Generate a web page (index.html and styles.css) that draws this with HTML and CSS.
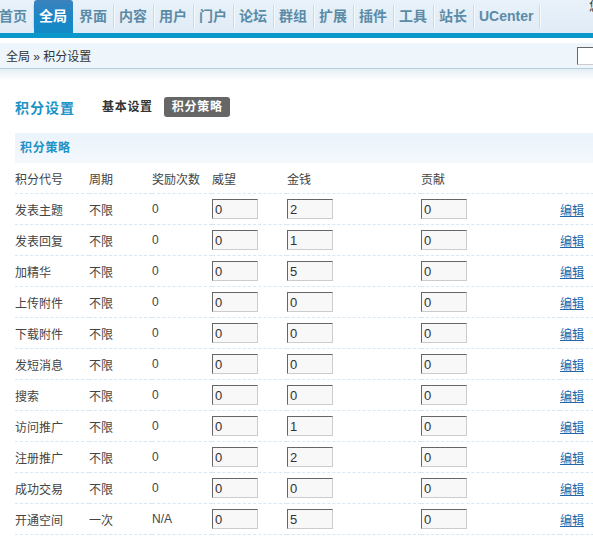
FILE: index.html
```html
<!DOCTYPE html>
<html lang="zh-CN">
<head>
<meta charset="utf-8">
<title>积分设置</title>
<link rel="stylesheet" href="styles.css">
</head>
<body>
<div class="header">
  <ul class="menu">
    <li><a href="#">首页</a></li>
    <li class="on"><a href="#">全局</a></li>
    <li><a href="#">界面</a></li>
    <li><a href="#">内容</a></li>
    <li><a href="#">用户</a></li>
    <li><a href="#">门户</a></li>
    <li><a href="#">论坛</a></li>
    <li><a href="#">群组</a></li>
    <li><a href="#">扩展</a></li>
    <li><a href="#">插件</a></li>
    <li><a href="#">工具</a></li>
    <li><a href="#">站长</a></li>
    <li><a href="#" class="latin">UCenter</a></li>
  </ul>
  <span class="welcome">您好</span>
</div>
<div class="crumb">
  <span class="crumb-text">全局 &raquo; 积分设置</span>
  <input class="search" type="text">
</div>
<div class="crumb-shade"></div>

<div class="main">
  <div class="titlebar">
    <h3 class="title">积分设置</h3>
    <a class="tab" href="#">基本设置</a>
    <a class="tab current" href="#">积分策略</a>
  </div>
  <div class="section">积分策略</div>
  <table class="grid">
    <colgroup>
      <col class="c1"><col class="c2"><col class="c3"><col class="c4"><col class="c5"><col class="c6"><col class="c7">
    </colgroup>
    <thead>
      <tr><th>积分代号</th><th>周期</th><th>奖励次数</th><th>威望</th><th>金钱</th><th>贡献</th><th></th></tr>
    </thead>
    <tbody>
      <tr><td>发表主题</td><td>不限</td><td>0</td><td><input class="txt" value="0"></td><td><input class="txt" value="2"></td><td><input class="txt" value="0"></td><td><a class="edit" href="#">编辑</a></td></tr>
      <tr><td>发表回复</td><td>不限</td><td>0</td><td><input class="txt" value="0"></td><td><input class="txt" value="1"></td><td><input class="txt" value="0"></td><td><a class="edit" href="#">编辑</a></td></tr>
      <tr><td>加精华</td><td>不限</td><td>0</td><td><input class="txt" value="0"></td><td><input class="txt" value="5"></td><td><input class="txt" value="0"></td><td><a class="edit" href="#">编辑</a></td></tr>
      <tr><td>上传附件</td><td>不限</td><td>0</td><td><input class="txt" value="0"></td><td><input class="txt" value="0"></td><td><input class="txt" value="0"></td><td><a class="edit" href="#">编辑</a></td></tr>
      <tr><td>下载附件</td><td>不限</td><td>0</td><td><input class="txt" value="0"></td><td><input class="txt" value="0"></td><td><input class="txt" value="0"></td><td><a class="edit" href="#">编辑</a></td></tr>
      <tr><td>发短消息</td><td>不限</td><td>0</td><td><input class="txt" value="0"></td><td><input class="txt" value="0"></td><td><input class="txt" value="0"></td><td><a class="edit" href="#">编辑</a></td></tr>
      <tr><td>搜索</td><td>不限</td><td>0</td><td><input class="txt" value="0"></td><td><input class="txt" value="0"></td><td><input class="txt" value="0"></td><td><a class="edit" href="#">编辑</a></td></tr>
      <tr><td>访问推广</td><td>不限</td><td>0</td><td><input class="txt" value="0"></td><td><input class="txt" value="1"></td><td><input class="txt" value="0"></td><td><a class="edit" href="#">编辑</a></td></tr>
      <tr><td>注册推广</td><td>不限</td><td>0</td><td><input class="txt" value="0"></td><td><input class="txt" value="2"></td><td><input class="txt" value="0"></td><td><a class="edit" href="#">编辑</a></td></tr>
      <tr><td>成功交易</td><td>不限</td><td>0</td><td><input class="txt" value="0"></td><td><input class="txt" value="0"></td><td><input class="txt" value="0"></td><td><a class="edit" href="#">编辑</a></td></tr>
      <tr><td>开通空间</td><td>一次</td><td>N/A</td><td><input class="txt" value="0"></td><td><input class="txt" value="5"></td><td><input class="txt" value="0"></td><td><a class="edit" href="#">编辑</a></td></tr>
    </tbody>
  </table>
</div>
</body>
</html>
```

FILE: styles.css
```css
html, body {
  margin: 0;
  padding: 0;
  overflow: hidden;
  background: #fff;
}
body {
  font-family: "Liberation Sans", "Noto Sans CJK SC", sans-serif;
  font-size: 12px;
  color: #444;
}
a { text-decoration: none; }

.header {
  position: relative;
  height: 33px;
  background: linear-gradient(#e9f2fa, #dfebf6);
  border-bottom: 5px solid #0a98cb;
}
.menu {
  list-style: none;
  margin: 0 0 0 -6px;
  padding: 0;
  display: flex;
  height: 33px;
  white-space: nowrap;
}
.menu li {
  display: flex;
  position: relative;
}
.menu li::after {
  content: "";
  width: 1px;
  margin-top: 5px;
  height: 23px;
  background: #cadbe7;
  box-shadow: 1px 0 0 #f4f9fc;
}
.menu a {
  display: block;
  height: 33px;
  line-height: 33px;
  padding: 0 6px 0 5px;
  font-size: 14px;
  font-weight: bold;
  color: #5b8ba6;
}
.menu a.latin {
  font-size: 14px;
  letter-spacing: 0;
}
.menu li.on a {
  color: #fff;
  background: linear-gradient(#3b82bd, #1b86c5 55%, #1289c6);
  border-radius: 3px 3px 0 0;
}
.menu li.on::after {
  background: transparent;
  box-shadow: none;
}
.welcome {
  position: absolute;
  left: 589px;
  top: 0;
  font-size: 12px;
  color: #333;
  line-height: 14px;
  white-space: nowrap;
}

.crumb {
  margin-top: 5px;
  height: 25px;
  background: #eef6fb;
  border-bottom: 1px solid #b6cfdd;
  display: flex;
  align-items: center;
  justify-content: space-between;
}
.crumb-text {
  padding-left: 6px;
  color: #333;
  font-size: 12px;
}
.search {
  width: 40px;
  height: 18px;
  box-sizing: border-box;
  margin: 0 -24px 0 0;
  border: 1px solid;
  border-color: #666 #ccc #ccc #666;
  background: #fff;
  padding: 0;
}
.crumb-shade {
  height: 11px;
  background: linear-gradient(#e2eef5, #fff);
}

.main {
  padding-left: 15px;
  width: 620px;
}
.titlebar {
  display: flex;
  align-items: center;
  height: 20px;
  margin-top: 17px;
}
.title {
  margin: 0;
  width: 87px;
  font-size: 14px;
  font-weight: bold;
  letter-spacing: 1px;
  color: #1a93c9;
}
.tab {
  font-weight: bold;
  color: #333;
  font-size: 12px;
  letter-spacing: 0.7px;
  height: 20px;
  line-height: 20px;
}
.tab.current {
  margin-left: 11px;
  padding: 0 7px 0 8px;
  background: #666;
  color: #fff;
  border-radius: 3px;
}

.section {
  margin-top: 16px;
  height: 30px;
  line-height: 30px;
  padding-left: 5px;
  font-weight: bold;
  color: #1a93c9;
  letter-spacing: 0.7px;
  background: linear-gradient(#ebf3fb, #f3f8fd);
}

.grid {
  width: 610px;
  table-layout: fixed;
  border-collapse: collapse;
}
.c1 { width: 74px; }
.c2 { width: 63px; }
.c3 { width: 60px; }
.c4 { width: 75px; }
.c5 { width: 134px; }
.c6 { width: 139px; }
.c7 { width: 65px; }
.grid th,
.grid td {
  height: 30px;
  padding: 0;
  text-align: left;
  font-weight: normal;
  font-size: 12px;
  color: #444;
  border-bottom: 1px dashed #d8e7f4;
  vertical-align: middle;
  white-space: nowrap;
}
.txt {
  display: block;
  width: 46px;
  height: 20px;
  box-sizing: border-box;
  margin: 0;
  padding: 0 2px;
  border: 1px solid;
  border-color: #666 #ccc #ccc #666;
  background: #f8f8f8;
  font-family: "Liberation Sans", sans-serif;
  font-size: 13px;
  color: #333;
}
.edit {
  color: #2366a8;
  text-decoration: underline;
}
```
